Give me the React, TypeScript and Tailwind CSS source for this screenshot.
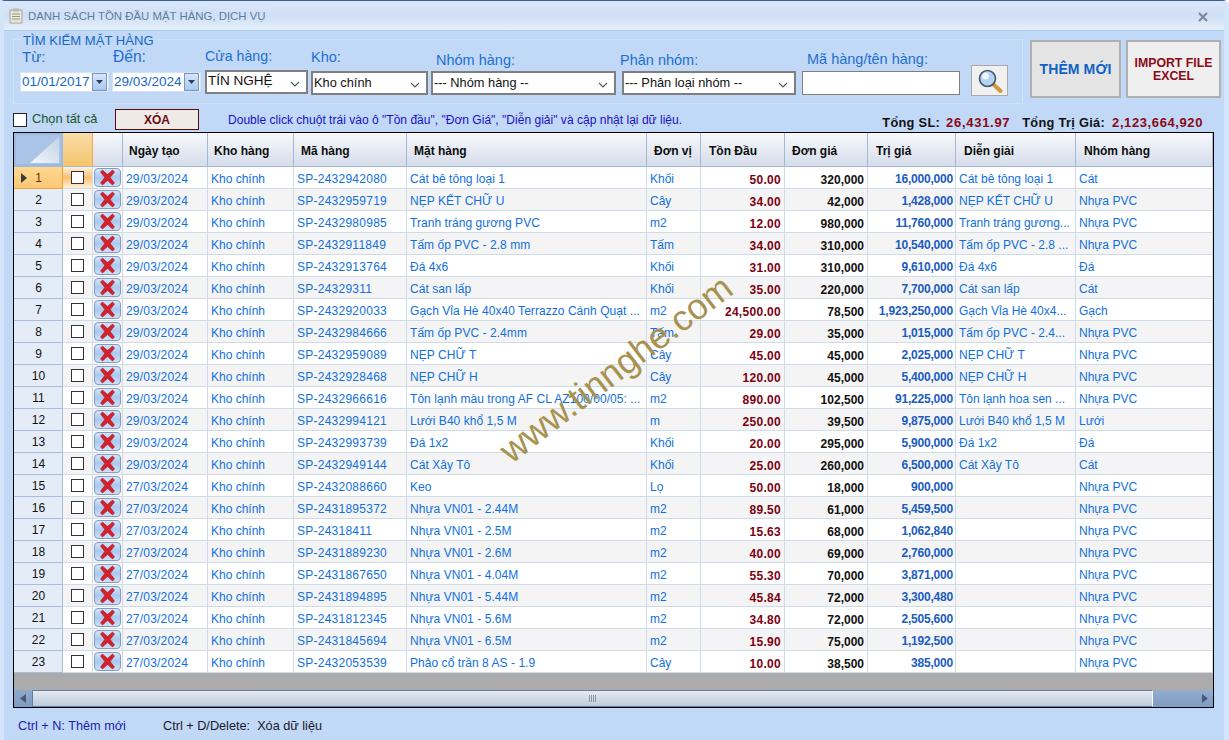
import React from "react";

const cols = "grid grid-cols-[49px_30px_30px_85px_86px_113px_240px_54px_84px_83px_88px_120px_137px]";

type Row = [string, string, string, string, string, string, string, string, string];
const K = "Khối", N = "Nhựa PVC";
const rows: Row[] = [
  ["29/03/2024", "SP-2432942080", "Cát bê tông loại 1", K, "50.00", "320,000", "16,000,000", "Cát bê tông loại 1", "Cát"],
  ["29/03/2024", "SP-2432959719", "NẸP KẾT CHỮ U", "Cây", "34.00", "42,000", "1,428,000", "NẸP KẾT CHỮ U", N],
  ["29/03/2024", "SP-2432980985", "Tranh tráng gương PVC", "m2", "12.00", "980,000", "11,760,000", "Tranh tráng gương...", N],
  ["29/03/2024", "SP-2432911849", "Tấm ốp PVC - 2.8 mm", "Tấm", "34.00", "310,000", "10,540,000", "Tấm ốp PVC - 2.8 ...", N],
  ["29/03/2024", "SP-2432913764", "Đá 4x6", K, "31.00", "310,000", "9,610,000", "Đá 4x6", "Đá"],
  ["29/03/2024", "SP-24329311", "Cát san lấp", K, "35.00", "220,000", "7,700,000", "Cát san lấp", "Cát"],
  ["29/03/2024", "SP-2432920033", "Gạch Vỉa Hè 40x40 Terrazzo Cánh Quạt ...", "m2", "24,500.00", "78,500", "1,923,250,000", "Gạch Vỉa Hè 40x4...", "Gạch"],
  ["29/03/2024", "SP-2432984666", "Tấm ốp PVC - 2.4mm", "Tấm", "29.00", "35,000", "1,015,000", "Tấm ốp PVC - 2.4...", N],
  ["29/03/2024", "SP-2432959089", "NẸP CHỮ T", "Cây", "45.00", "45,000", "2,025,000", "NẸP CHỮ T", N],
  ["29/03/2024", "SP-2432928468", "NẸP CHỮ H", "Cây", "120.00", "45,000", "5,400,000", "NẸP CHỮ H", N],
  ["29/03/2024", "SP-2432966616", "Tôn lạnh màu trong AF CL AZ100/00/05: ...", "m2", "890.00", "102,500", "91,225,000", "Tôn lạnh hoa sen ...", N],
  ["29/03/2024", "SP-2432994121", "Lưới B40 khổ 1,5 M", "m", "250.00", "39,500", "9,875,000", "Lưới B40 khổ 1,5 M", "Lưới"],
  ["29/03/2024", "SP-2432993739", "Đá 1x2", K, "20.00", "295,000", "5,900,000", "Đá 1x2", "Đá"],
  ["29/03/2024", "SP-2432949144", "Cát Xây Tô", K, "25.00", "260,000", "6,500,000", "Cát Xây Tô", "Cát"],
  ["27/03/2024", "SP-2432088660", "Keo", "Lọ", "50.00", "18,000", "900,000", "", N],
  ["27/03/2024", "SP-2431895372", "Nhựa VN01 - 2.44M", "m2", "89.50", "61,000", "5,459,500", "", N],
  ["27/03/2024", "SP-24318411", "Nhựa VN01 - 2.5M", "m2", "15.63", "68,000", "1,062,840", "", N],
  ["27/03/2024", "SP-2431889230", "Nhựa VN01 - 2.6M", "m2", "40.00", "69,000", "2,760,000", "", N],
  ["27/03/2024", "SP-2431867650", "Nhựa VN01 - 4.04M", "m2", "55.30", "70,000", "3,871,000", "", N],
  ["27/03/2024", "SP-2431894895", "Nhựa VN01 - 5.44M", "m2", "45.84", "72,000", "3,300,480", "", N],
  ["27/03/2024", "SP-2431812345", "Nhựa VN01 - 5.6M", "m2", "34.80", "72,000", "2,505,600", "", N],
  ["27/03/2024", "SP-2431845694", "Nhựa VN01 - 6.5M", "m2", "15.90", "75,000", "1,192,500", "", N],
  ["27/03/2024", "SP-2432053539", "Phảo cổ trần 8 AS - 1.9", "Cây", "10.00", "38,500", "385,000", "", N],
];

const headers: [string, string][] = [
  ["Ngày tạo", "pl-[6px]"],
  ["Kho hàng", "pl-[6px]"],
  ["Mã hàng", "pl-[7px]"],
  ["Mặt hàng", "pl-[7px]"],
  ["Đơn vị", "pl-[7px]"],
  ["Tồn Đầu", "pl-[8px]"],
  ["Đơn giá", "pl-[7px]"],
  ["Trị giá", "pl-[8px]"],
  ["Diễn giải", "pl-[8px]"],
  ["Nhóm hàng", "pl-[8px]"],
];

function Chevron() {
  return (
    <svg width="10" height="6" viewBox="0 0 10 6" className="absolute right-[6px] top-[9px]">
      <path d="M1 1 L5 5 L9 1" fill="none" stroke="#555" strokeWidth="1.1" />
    </svg>
  );
}

function Combo({ text, cls }: { text: string; cls: string }) {
  return (
    <div className={`relative h-[24px] bg-white border-2 border-[#7f7f7f] pl-[1px] text-[#111] whitespace-nowrap ${cls}`}>
      {text}
      <Chevron />
    </div>
  );
}

function DateBox({ text, cls }: { text: string; cls: string }) {
  return (
    <div className={`flex items-center justify-between h-[20px] bg-white border border-[#d3e2f6] pl-[1px] pr-[1px] text-[13.5px] text-[#1668c8] ${cls}`}>
      <span>{text}</span>
      <span className="flex items-center justify-center w-[15px] h-[18px] border border-[#7d96b8] bg-gradient-to-b from-[#d6e6fb] to-[#a9c8f2]">
        <svg width="7" height="4" viewBox="0 0 7 4"><path d="M0 0H7L3.5 4Z" fill="#2b3f5e" /></svg>
      </span>
    </div>
  );
}

function XIcon() {
  return (
    <span className="flex items-center justify-center w-[27px] h-[19px] rounded-[4px] border border-[#7f9dc4] bg-gradient-to-b from-[#d5e4f8] via-[#a9c8f0] to-[#cfe0f7]">
      <svg width="19" height="17" viewBox="0 0 19 17">
        <path d="M2.5 3 L4.5 1 L9.5 5.6 L14.5 1 L16.5 3 L12.2 8.5 L16.5 14 L14.5 16 L9.5 11.4 L4.5 16 L2.5 14 L6.8 8.5 Z" fill="#d3222b" stroke="#b01a22" strokeWidth="0.6" strokeLinejoin="round" />
      </svg>
    </span>
  );
}

export default function App() {
  return (
    <div className="relative w-[1229px] h-[740px] overflow-hidden flex flex-col bg-[#c1d8f7] border-t border-t-[#3c5f8e] border-l-[4px] border-l-[#d3e4fb] border-r-[5px] border-r-[#d3e4fb] rounded-tr-[6px] [font-family:Liberation_Sans,Arial,sans-serif] text-[12px]">
      {/* title bar */}
      <div className="-ml-[4px] -mr-[5px] h-[30px] shrink-0 flex items-center pl-[9px] pr-[21px] border-b border-b-[#a9cdf3] bg-gradient-to-b from-[#dbe8fb] via-[#cfdff6] to-[#e4effc]">
        <svg width="14" height="16" viewBox="0 0 14 16" className="mr-[5px]">
          <rect x="1" y="2" width="12" height="13" fill="#e8e6da" stroke="#a8a89a" />
          <rect x="4" y="0.5" width="6" height="3" fill="#b9b9ab" />
          <path d="M3 6H11M3 8.5H11M3 11H11" stroke="#9a9a8c" strokeWidth="1" />
        </svg>
        <span className="mt-[3px] text-[11.4px] text-[#5f7c9a]">DANH SÁCH TỒN ĐẦU MẶT HÀNG, DỊCH VỤ</span>
        <svg width="10" height="10" viewBox="0 0 10 10" className="ml-auto mt-[3px]">
          <path d="M1 1 L9 9 M9 1 L1 9" stroke="#7c8a9c" strokeWidth="2.2" />
        </svg>
      </div>

      {/* search band */}
      <div className="flex shrink-0 h-[73px] pl-[9px]">
        <div className="mt-[8px] w-[1010px] h-[65px] border border-[#d3e1f5]">
          <div className="-mt-[7px] ml-[7px] w-fit px-[2px] h-[15px] bg-[#c1d8f7] text-[13.1px] leading-[15px] text-[#1668c8]">TÌM KIẾM MẶT HÀNG</div>
          <div className="flex items-start pl-[6px] text-[#1f70d0]">
            <div className="w-[92px] flex flex-col">
              <span className="pl-[2px] h-[24px] text-[15px] leading-[18px]">Từ:</span>
              <DateBox text="01/01/2017" cls="w-[89px]" />
            </div>
            <div className="w-[93px] flex flex-col">
              <span className="pl-[1px] h-[24px] text-[15.6px] leading-[18px]">Đến:</span>
              <DateBox text="29/03/2024" cls="w-[89px]" />
            </div>
            <div className="w-[106px] flex flex-col -mt-[1px]">
              <span className="text-[14.2px] h-[23px] leading-[18px]">Cửa hàng:</span>
              <Combo text="TÍN NGHỆ" cls="w-[103px] text-[13.5px] leading-[17px]" />
            </div>
            <div className="w-[120px] flex flex-col">
              <span className="text-[14.5px] h-[23px] leading-[18px]">Kho:</span>
              <Combo text="Kho chính" cls="w-[117px] text-[12.8px] leading-[19px]" />
            </div>
            <div className="w-[191px] flex flex-col">
              <span className="pl-[5px] pt-[3px] text-[14.5px] h-[23px] leading-[18px]">Nhóm hàng:</span>
              <Combo text="--- Nhóm hàng --" cls="w-[185px] text-[12.8px] leading-[19px]" />
            </div>
            <div className="w-[180px] flex flex-col">
              <span className="-ml-[2px] pt-[3px] text-[14.5px] h-[23px] leading-[18px]">Phân nhóm:</span>
              <Combo text="--- Phân loại nhóm --" cls="w-[174px] text-[12.8px] leading-[19px]" />
            </div>
            <div className="w-[169px] flex flex-col">
              <span className="pl-[5px] pt-[2px] text-[14.5px] h-[23px] leading-[18px]">Mã hàng/tên hàng:</span>
              <div className="w-[158px] h-[24px] bg-white border border-[#7f7f7f]" />
            </div>
            <div className="mt-[17px] w-[37px] h-[31px] flex items-center justify-center border border-[#a9a9a9] bg-[#f0f0f0]">
              <svg width="26" height="26" viewBox="0 0 26 26">
                <path d="M16 16 L23.5 23" stroke="#d09a3a" strokeWidth="4" strokeLinecap="round" />
                <circle cx="10.5" cy="10.5" r="8" fill="#b4d2f2" stroke="#46586c" strokeWidth="1.6" />
                <circle cx="8.5" cy="8" r="3.5" fill="#eef6fe" />
              </svg>
            </div>
          </div>
        </div>
        <button className="ml-[7px] mt-[9px] w-[91px] h-[58px] border-2 border-[#b0b0b0] bg-[#e4e4e4] text-[14px] tracking-[0.1px] font-bold text-[#0f62c6]">THÊM MỚI</button>
        <button className="ml-[5px] mt-[9px] w-[95px] h-[58px] pt-[1px] border-2 border-[#b0b0b0] bg-[#efefef] text-[12.3px] leading-[13px] font-bold text-[#8b0a14]">IMPORT FILE<br />EXCEL</button>
      </div>

      {/* tool row */}
      <div className="flex items-center shrink-0 h-[28px] pl-[9px] pt-[3px]">
        <span className="w-[14px] h-[14px] border border-[#222] bg-white" />
        <span className="ml-[5px] -mt-[1px] w-[83px] text-[12.8px] text-[#17552c]">Chọn tất cả</span>
        <span className="w-[84px] h-[21px] flex items-center justify-center border border-[#5a0a0a] bg-[#efeae6] font-bold text-[#6b0a14]">XÓA</span>
        <span className="ml-[29px] mt-[1px] text-[#1a10c8] text-[12px] tracking-[0.02px]">Double click chuột trái vào ô "Tồn đầu", "Đơn Giá", "Diễn giải" và cập nhật lại dữ liệu.</span>
        <span className="ml-auto mt-[6px] font-bold text-[#111] text-[12.8px] tracking-[0.3px]">Tổng SL:</span>
        <span className="ml-[6px] mt-[6px] font-bold text-[#8b0a14] text-[13px] tracking-[0.7px]">26,431.97</span>
        <span className="ml-[12px] mt-[6px] font-bold text-[#111] text-[12.8px] tracking-[0.3px]">Tổng Trị Giá:</span>
        <span className="ml-[7px] mr-[21px] mt-[6px] font-bold text-[#8b0a14] text-[13px] tracking-[0.6px]">2,123,664,920</span>
      </div>

      {/* grid */}
      <div className="ml-[9px] w-[1201px] h-[576px] shrink-0 border border-black bg-[#ababab] flex flex-col overflow-hidden">
        <div className={`${cols} h-[34px] shrink-0 border-b border-b-[#a3b8d3]`}>
          <div className="relative border-[2px] border-[#9dbbe0] bg-[#a9c4e6] overflow-hidden">
            <svg width="45" height="30" viewBox="0 0 45 30" className="absolute inset-0">
              <defs>
                <linearGradient id="corner" x1="0" y1="1" x2="1" y2="0">
                  <stop offset="0" stopColor="#f2f5f9" />
                  <stop offset="1" stopColor="#c4d3e6" />
                </linearGradient>
              </defs>
              <path d="M43 2 V28 H14 Z" fill="url(#corner)" />
            </svg>
          </div>
          <div className="bg-gradient-to-b from-[#f8dca6] to-[#f5c56e] border-r border-r-[#f0a848]" />
          <div className="bg-gradient-to-b from-[#f7f9fc] to-[#d5dcea] border-r border-r-[#a3b8d3]" />
          {headers.map(([h, p]) => (
            <div key={h} className={`flex items-center pt-[2px] font-bold text-[12px] text-[#0d0d0d] bg-gradient-to-b from-[#f7f9fc] to-[#d5dcea] border-r border-r-[#a3b8d3] ${p}`}>{h}</div>
          ))}
        </div>
        {rows.map((r, i) => (
          <div key={i} className={`${cols} h-[22px] shrink-0 leading-[20px] ${i % 2 ? "bg-[#f4f4f4]" : "bg-white"}`}>
            <div className={`relative text-center pt-[1px] pl-[1px] border-b border-r ${i === 0 ? "bg-gradient-to-b from-[#ffd88f] to-[#fbc777] border-[#f0a03c] text-[#7a2a00]" : "bg-[#e4ecf7] border-[#a9bdd8] text-[#111]"}`}>
              {i === 0 && (
                <svg width="6" height="10" viewBox="0 0 6 10" className="absolute left-[7px] top-[6px]"><path d="M0 0L6 5L0 10Z" fill="#3a3a3a" /></svg>
              )}
              {i + 1}
            </div>
            <div className={`flex items-center justify-center border-b border-r border-[#d0dbea] ${i === 0 ? "bg-gradient-to-b from-[#fdf3dc] via-[#fbbf70] to-[#fdf1d8]" : ""}`}>
              <span className="w-[13px] h-[13px] bg-white border border-[#333]" />
            </div>
            <div className="flex items-center justify-center border-b border-r border-[#d0dbea]"><XIcon /></div>
            <Cell cls="pl-[3px] pt-[2px] text-[#1070e0] tracking-[0.2px]">{r[0]}</Cell>
            <Cell cls="pl-[3px] pt-[2px] text-[#1070e0]">Kho chính</Cell>
            <Cell cls="pl-[3px] pt-[2px] text-[#1070e0] tracking-[0.25px]">{r[1]}</Cell>
            <Cell cls="pl-[3px] pt-[2px] text-[#1070e0] tracking-[0.05px]">{r[2]}</Cell>
            <Cell cls="pl-[3px] pt-[2px] text-[#1070e0]">{r[3]}</Cell>
            <Cell cls="pr-[3px] pt-[3px] text-right font-bold text-[#7d0010] tracking-[0.3px]">{r[4]}</Cell>
            <Cell cls="pr-[3px] pt-[3px] text-right font-bold text-[#111]">{r[5]}</Cell>
            <Cell cls="pr-[2px] pt-[2px] text-right font-bold text-[#1a5cc0] tracking-[-0.2px]">{r[6]}</Cell>
            <Cell cls="pl-[3px] pt-[2px] text-[#1070e0]">{r[7]}</Cell>
            <Cell cls="pl-[3px] pt-[2px] text-[#1070e0]">{r[8]}</Cell>
          </div>
        ))}
        <div className="h-[17px] shrink-0 bg-[#ababab]" />
        <div className="flex h-[17px] shrink-0">
          <div className="w-[18px] flex items-center justify-center bg-gradient-to-b from-[#8fa9cc] to-[#7f9bc2]">
            <svg width="6" height="9" viewBox="0 0 6 9"><path d="M6 0V9L0 4.5Z" fill="#4a5a72" /></svg>
          </div>
          <div className="relative w-[1121px] flex items-center justify-center border border-[#5f7fac] border-r-white bg-gradient-to-b from-[#e4e9ee] to-[#bfcbdb]">
            <span className="w-[8px] h-[7px] bg-[repeating-linear-gradient(90deg,#8a97a8_0_1px,transparent_1px_2px)]" />
          </div>
          <div className="flex-1 flex items-center justify-end pr-[5px] bg-gradient-to-b from-[#94adcf] to-[#7f9bc2]">
            <svg width="6" height="9" viewBox="0 0 6 9"><path d="M0 0V9L6 4.5Z" fill="#4a5a72" /></svg>
          </div>
        </div>
      </div>

      {/* footer */}
      <div className="flex items-center flex-1 pl-[14px] pt-[6px] text-[12.7px]">
        <span className="w-[145px] text-[#1a1ab0]">Ctrl + N: Thêm mới</span>
        <span className="text-[#1a1a2a]">Ctrl + D/Delete:&nbsp; Xóa dữ liệu</span>
      </div>

      {/* watermark */}
      <div className="absolute left-[464px] top-[348px] w-[296px] text-center text-[36px] leading-[40px] text-[#a8924f] whitespace-nowrap -rotate-[37.5deg] pointer-events-none">
        www.tinnghe.com
      </div>
    </div>
  );
}

function Cell({ cls, children }: { cls: string; children: React.ReactNode }) {
  return <div className={`overflow-hidden whitespace-nowrap border-b border-r border-[#d0dbea] ${cls}`}>{children}</div>;
}
